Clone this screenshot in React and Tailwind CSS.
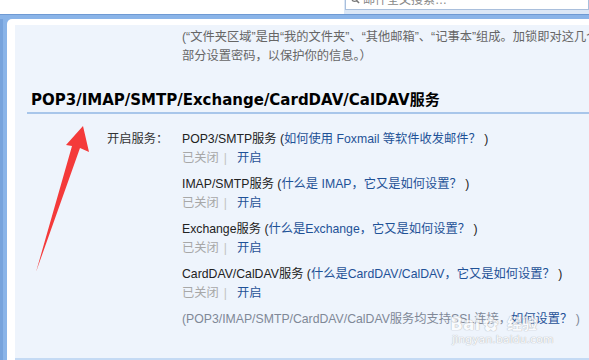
import React from "react";

const services = [
  { name: "POP3/SMTP服务", help: "如何使用 Foxmail 等软件收发邮件？" },
  { name: "IMAP/SMTP服务", help: "什么是 IMAP，它又是如何设置？" },
  { name: "Exchange服务", help: "什么是Exchange，它又是如何设置？" },
  { name: "CardDAV/CalDAV服务", help: "什么是CardDAV/CalDAV，它又是如何设置？" },
];

function Arrow() {
  return (
    <svg className="absolute inset-0 pointer-events-none" width="589" height="360">
      <polygon
        points="83,126 89,152 80,148 36,272 72,146 66,145"
        fill="#f43a3a"
      />
    </svg>
  );
}

function Watermark() {
  return (
    <div className="absolute left-[450px] top-[296px] pointer-events-none text-white opacity-70 [text-shadow:0_0_1px_#a0a0a0,0_0_1px_#a0a0a0]">
      <div className="flex items-end gap-[2px] font-['DejaVu_Sans','Noto_Sans_CJK_SC',sans-serif] font-bold">
        <span className="text-[17px] leading-[20px] mt-[18px]">Bai</span>
        <span className="text-[20px] leading-[22px] -mb-[1px]">✿</span>
        <span className="text-[15px] leading-[20px] ml-[6px]">经验</span>
      </div>
      <div className="text-[11px] leading-[12px] ml-[2px] font-['DejaVu_Sans',sans-serif]">
        jingyan.baidu.com
      </div>
    </div>
  );
}

export default function App() {
  return (
    <div className="relative w-[589px] h-[360px] overflow-hidden bg-white font-['Liberation_Sans','Noto_Sans_CJK_SC',sans-serif] text-[12.25px] text-[#222]">
      {/* top strip with search box */}
      <div className="flex h-[14px]">
        <div className="flex-1" />
        <div className="w-[245px] shrink-0 bg-[#dbe7f6] pl-[1px] overflow-hidden">
          <div className="-mt-[11px] h-[21px] bg-white border border-[#a9bfdc] flex items-center gap-[3px] pl-[5px] text-[12px] text-[#888]">
            <svg width="9" height="9" viewBox="0 0 10 10">
              <circle cx="4" cy="4" r="3" fill="none" stroke="#777" strokeWidth="1.4" />
              <line x1="6" y1="6" x2="9" y2="9" stroke="#777" strokeWidth="1.6" />
            </svg>
            <span>邮件全文搜索…</span>
          </div>
        </div>
      </div>

      {/* blue bar */}
      <div className="h-[5px] bg-[#8ab4e8] border-t border-[#6f9ad3]" />

      <div className="flex bg-[#8ab4e8] h-[341px]">
        <div className="w-[7px] shrink-0 border-l-[3px] border-[#77a3dc]" />
        <div className="flex-1 min-w-0 overflow-hidden bg-white rounded-tl-[5px] pt-[6px] pl-[8px]">
          <div className="h-full bg-[#eef4fc] border-b-2 border-[#c4daf4]">
            <div className="pt-[3px] pl-[167px] leading-[19px] text-[#666] whitespace-nowrap">
              <div>(“文件夹区域”是由“我的文件夹”、“其他邮箱”、“记事本”组成。加锁即对这几个</div>
              <div>部分设置密码，以保护你的信息。）</div>
            </div>

            <div className="mt-[24px] ml-[12px] pl-[4px] pb-[2px] border-b-2 border-[#a8c6ea]">
              <h2 className="font-['DejaVu_Sans','Noto_Sans_CJK_SC',sans-serif] font-bold text-[15px] leading-[20px] text-black">
                POP3/IMAP/SMTP/Exchange/CardDAV/CalDAV服务
              </h2>
            </div>

            <div className="flex mt-[16px] leading-[19px]">
              <div className="w-[167px] shrink-0 pl-[92px] text-[#333]">开启服务：</div>
              <div className="flex flex-col gap-[7px] whitespace-nowrap">
                {services.map((s) => (
                  <div key={s.name}>
                    <div className="text-[#222]">
                      {s.name} (<span className="text-[#1f5297]">{s.help}</span> )
                    </div>
                    <div>
                      <span className="text-[#a8a8a8]">已关闭</span>
                      <span className="text-[#c4c4c4] ml-[5px] mr-[10px]">|</span>
                      <span className="text-[#1f5297]">开启</span>
                    </div>
                  </div>
                ))}
                <div className="text-[#7f8897]">
                  (POP3/IMAP/SMTP/CardDAV/CalDAV服务均支持SSL连接，
                  <span className="text-[#1f5297]">如何设置？</span> )
                </div>
              </div>
            </div>
          </div>
        </div>
      </div>

      <Watermark />
      <Arrow />
    </div>
  );
}
